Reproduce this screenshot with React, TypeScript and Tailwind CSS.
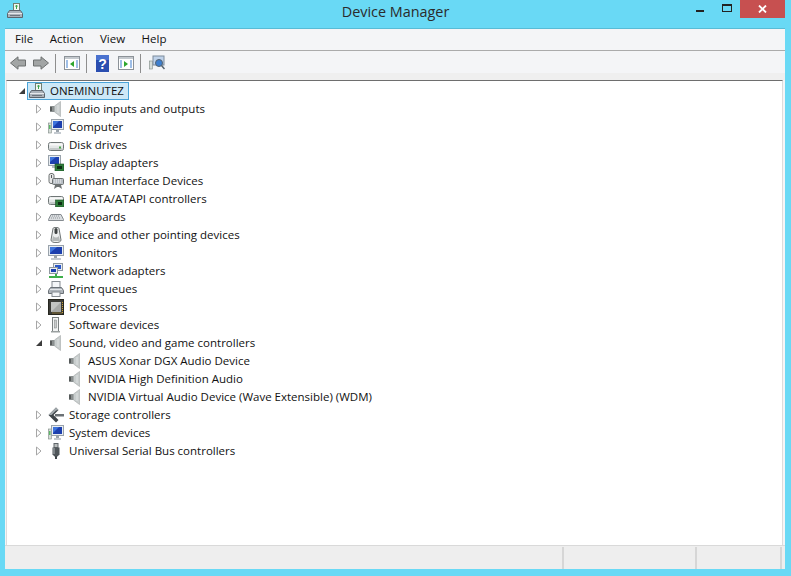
const font = { fontFamily: '"Open Sans", "Noto Sans", sans-serif' };

function Speaker() {
  return (
    <svg width="16" height="16" viewBox="0 0 16 16">
      <rect x="2" y="5" width="5" height="6" fill="#8b9090" />
      <rect x="2" y="6" width="2" height="4" fill="#565a5a" />
      <path d="M6.5 5 L12.5 0.5 V15.5 L6.5 11 Z" fill="#c8cdcd" stroke="#a4aaaa" strokeWidth="0.6" />
      <path d="M10 4 V12" stroke="#dfe3e3" />
    </svg>
  );
}

function Monitor({ tower }: { tower?: boolean }) {
  return (
    <svg width="16" height="16" viewBox="0 0 16 16">
      {tower && <rect x="0.3" y="4" width="3" height="10" fill="#d6dcd8" stroke="#7f8a86" strokeWidth="0.6" />}
      {tower && <rect x="1.2" y="6" width="1.2" height="4" fill="#3fb04a" />}
      <rect x={tower ? 3.5 : 0.5} y="0.5" width={tower ? 12 : 15} height="10" fill="#e8edf2" stroke="#9aa3ab" />
      <rect x={tower ? 5 : 2} y="2" width={tower ? 9 : 12} height="7" fill="#1c3fae" />
      <path d={tower ? 'M5 2h6L5 8z' : 'M2 2h7L2 8z'} fill="#3e74dc" />
      <rect x={tower ? 8 : 6} y="11" width="3" height="2" fill="#9aa3ab" />
      <rect x={tower ? 6 : 3} y="13" width={tower ? 7 : 10} height="2" fill="#c4cad0" />
    </svg>
  );
}

function Disk({ chip }: { chip?: boolean }) {
  return (
    <svg width="16" height="16" viewBox="0 0 16 16">
      <rect x="0.5" y="5.5" width="15" height="8" rx="2" fill="#e4e7e7" stroke="#6f7676" />
      <rect x="1.5" y="6.5" width="13" height="2" fill="#f7f8f8" />
      <rect x="1.5" y="11" width="13" height="2" fill="#c4c9c9" />
      <rect x="11" y="9.5" width="2" height="2" fill="#4aa54a" />
      {chip && <rect x="7.5" y="9" width="8.5" height="7" fill="#2f7d3a" stroke="#1c4f25" strokeWidth="0.6" />}
      {chip && <rect x="10" y="11" width="4" height="3" fill="#0d2e14" />}
    </svg>
  );
}

function Display() {
  return (
    <svg width="16" height="16" viewBox="0 0 16 16">
      <rect x="0.5" y="0.5" width="12" height="10" fill="#e8edf2" stroke="#9aa3ab" />
      <rect x="2" y="2" width="9" height="7" fill="#1c3fae" />
      <path d="M2 2h6L2 7z" fill="#3e74dc" />
      <rect x="4" y="11" width="6" height="2" fill="#b6bcc2" />
      <rect x="7" y="9" width="9" height="7" fill="#2f7d3a" stroke="#1c4f25" strokeWidth="0.6" />
      <rect x="9" y="11" width="5" height="3" fill="#0d2e14" />
    </svg>
  );
}

function Hid() {
  return (
    <svg width="16" height="16" viewBox="0 0 16 16">
      <rect x="1" y="0.5" width="5" height="10" rx="2" fill="#e8e8e8" stroke="#6d7272" />
      <rect x="3" y="2" width="1" height="3" fill="#555a5a" />
      <rect x="4.5" y="5.5" width="11" height="6" rx="1" fill="#b9bfc5" stroke="#6d7272" />
      <path d="M6 7h8M6 9h8" stroke="#f3f4f5" strokeDasharray="1 1" />
      <path d="M6 16l1-4h6l1 4-3-2H9z" fill="#6d7272" />
    </svg>
  );
}

function Keyboard() {
  return (
    <svg width="16" height="16" viewBox="0 0 16 16">
      <path d="M3 5.5h10l2.5 5v1H0.5v-1z" fill="#d9dcdf" stroke="#858b90" />
      <path d="M4 7h8M3 9h10" stroke="#8f959a" strokeDasharray="1 1" />
    </svg>
  );
}

function Mouse() {
  return (
    <svg width="16" height="16" viewBox="0 0 16 16">
      <path d="M5 1.5C5 0 11 0 11 1.5L13 13c0 3.5-10 3.5-10 0z" fill="#eceeee" stroke="#6d7272" />
      <rect x="6.5" y="1" width="3" height="6" rx="1.5" fill="#3f4343" />
      <path d="M5 9c2 2 4 2 6 0l1 5H4z" fill="#b4b8b8" />
    </svg>
  );
}

function Network() {
  return (
    <svg width="16" height="16" viewBox="0 0 16 16">
      <rect x="5.5" y="0.5" width="9" height="7" fill="#e8edf2" stroke="#8f98a0" />
      <rect x="7" y="2" width="6" height="4" fill="#2a57c8" />
      <rect x="1.5" y="4.5" width="8" height="6" fill="#e8edf2" stroke="#8f98a0" />
      <rect x="3" y="6" width="5" height="3" fill="#1c3fae" />
      <rect x="7" y="11" width="2" height="3" fill="#3fb04a" />
      <rect x="1" y="13" width="14" height="2" fill="#3fb04a" />
    </svg>
  );
}

function Printer() {
  return (
    <svg width="16" height="16" viewBox="0 0 16 16">
      <rect x="4" y="0.5" width="8" height="6" fill="#f4f6f8" stroke="#868c92" />
      <path d="M2.5 6.5h11l2 3v3H0.5v-3z" fill="#aeb4ba" stroke="#6b7177" />
      <rect x="2" y="8" width="12" height="1" fill="#e2e5e8" />
      <rect x="4" y="11" width="8" height="4.5" fill="#f4f6f8" stroke="#868c92" />
    </svg>
  );
}

function Chip() {
  return (
    <svg width="16" height="16" viewBox="0 0 16 16">
      <rect x="0.5" y="0.5" width="15" height="15" fill="#3c3c38" stroke="#26261f" />
      <rect x="3" y="3" width="10" height="10" fill="#a6a8a6" />
      <path d="M3 3h10L3 13z" fill="#c2c4c2" />
      <path d="M14.5 3v11h-11" stroke="#c9a033" strokeDasharray="1 1" fill="none" />
    </svg>
  );
}

function Software() {
  return (
    <svg width="16" height="16" viewBox="0 0 16 16">
      <rect x="4.5" y="0.5" width="6" height="14" fill="#f2f3f3" stroke="#7a8080" />
      <rect x="6.5" y="3" width="2" height="8" fill="#c9cccc" stroke="#7a8080" strokeWidth="0.5" />
      <rect x="3" y="14" width="9" height="1.5" fill="#9aa0a0" />
    </svg>
  );
}

function Storage() {
  return (
    <svg width="16" height="16" viewBox="0 0 16 16">
      <path d="M8 0.5 L0.5 8 L8 15.5 L10.5 13 L5.5 8 L10.5 3 Z" fill="#3f4549" />
      <path d="M8 0.5 L0.5 8 L3.5 8 L8 3.5 L10.5 3Z" fill="#a3aaae" />
      <rect x="7" y="7" width="9" height="2.5" fill="#6b7175" />
    </svg>
  );
}

function Usb() {
  return (
    <svg width="16" height="16" viewBox="0 0 16 16">
      <rect x="6" y="0.5" width="4" height="4" fill="#b9bdbd" stroke="#60666a" />
      <path d="M4.5 4.5h7v7l-2 2h-3l-2-2z" fill="#50565a" />
      <rect x="5" y="5" width="2" height="6" fill="#80868a" />
      <rect x="7" y="13" width="2" height="3" fill="#3f4549" />
    </svg>
  );
}

function HostIcon() {
  return (
    <svg width="16" height="16" viewBox="0 0 16 16">
      <rect x="6.5" y="0.5" width="6" height="7" fill="#f2f6f2" stroke="#6f7f73" />
      <path d="M9.5 6V2.5M8.5 3.5l1-1.5 1 1.5" stroke="#3aa34a" fill="none" />
      <path d="M2.5 7.5h11l2 3v4H0.5v-4z" fill="#aab2ba" stroke="#5c646c" />
      <rect x="1" y="10" width="14" height="1" fill="#e6e9ec" />
      <rect x="3" y="12" width="10" height="1" fill="#6e767e" />
    </svg>
  );
}

function Collapsed() {
  return (
    <svg width="8" height="10" viewBox="0 0 8 10">
      <path d="M1.5 1 L6 5 L1.5 9 Z" fill="#fff" stroke="#a6a6a6" />
    </svg>
  );
}

function Expanded() {
  return (
    <svg width="8" height="8" viewBox="0 0 8 8">
      <path d="M7 1 V7 H1 Z" fill="#3c3c3c" />
    </svg>
  );
}

function Row({ label, icon, open }: { label: string; icon: React.ReactNode; open?: boolean }) {
  return (
    <div className="flex h-[18px] items-center">
      <div className="flex w-[41px] shrink-0 justify-end pr-[5px]">{open ? <Expanded /> : <Collapsed />}</div>
      <div className="flex w-[16px] shrink-0 justify-center">{icon}</div>
      <span className="ml-[5px] text-[11.5px] text-[#111]">{label}</span>
    </div>
  );
}

function Child({ label }: { label: string }) {
  return (
    <div className="flex h-[18px] items-center pl-[60px]">
      <Speaker />
      <span className="ml-[5px] text-[11.5px] text-[#111]">{label}</span>
    </div>
  );
}

function ToolSep({ className }: { className: string }) {
  return <div className={`h-[19px] w-[1px] bg-[#8e8e8e] ${className}`} />;
}

function PaneIcon({ right }: { right?: boolean }) {
  return (
    <svg width="16" height="16" viewBox="0 0 16 16">
      <rect x="0.5" y="1.5" width="15" height="13" fill="#fff" stroke="#8c9298" />
      <rect x="1" y="2" width="14" height="2" fill="#c4c9ce" />
      <path d="M2 6h2M2 8h2M2 10h2M2 12h2M12 6h2M12 8h2M12 10h2M12 12h2" stroke="#3f7fd0" />
      <path d={right ? 'M6 6 L10 9 L6 12 Z' : 'M10 6 L6 9 L10 12 Z'} fill="#2da62d" />
    </svg>
  );
}

function Arrow({ right }: { right?: boolean }) {
  return (
    <svg width="16" height="14" viewBox="0 0 16 14" className={right ? 'ml-[7px]' : ''}>
      <path d={right ? 'M0.5 4 H8 V0.8 L15.5 7 L8 13.2 V10 H0.5 Z' : 'M15.5 4 H8 V0.8 L0.5 7 L8 13.2 V10 H15.5 Z'} fill="#a2a5a5" stroke="#6d7070" />
    </svg>
  );
}

export default function App() {
  return (
    <div className="flex h-[576px] w-[791px] flex-col overflow-hidden bg-[#69d9f5]" style={font}>
      {/* title bar */}
      <div className="relative h-[28px] shrink-0">
        <div className="absolute left-[7px] top-[3px]"><HostIcon /></div>
        <div className="pt-[2px] text-center text-[14.4px] leading-[20px] text-[#2b2b2b]">Device Manager</div>
        <div className="absolute left-[696px] top-[10px] h-[2px] w-[8px] bg-[#222]" />
        <div className="absolute left-[722px] top-[4px] h-[8px] w-[10px] border border-t-2 border-[#222]" />
        <div className="absolute right-[6px] top-0 flex h-[18px] w-[45px] items-center justify-center bg-[#c75050]">
          <svg width="9" height="8" viewBox="0 0 9 8"><path d="M1 0.5 L8 7.5 M8 0.5 L1 7.5" stroke="#fff" strokeWidth="1.8" /></svg>
        </div>
      </div>

      <div className="ml-[5px] mr-[6px] flex min-h-0 flex-1 flex-col border-t border-[#58bcd6] bg-[#f4f5f7]">
        {/* menu */}
        <div className="flex h-[22px] shrink-0 items-center gap-[16.5px] border-b border-[#ababab] pb-[2px] pl-[10px] text-[11.5px] text-[#111]">
          <span>File</span>
          <span>Action</span>
          <span>View</span>
          <span>Help</span>
        </div>
        {/* toolbar */}
        <div className="flex h-[22px] shrink-0 items-center pl-[5px] pt-[2px]">
          <Arrow />
          <Arrow right />
          <ToolSep className="ml-[6px]" />
          <div className="ml-[8px]"><PaneIcon /></div>
          <ToolSep className="ml-[6px]" />
          <svg width="13" height="19" viewBox="0 0 13 19" className="ml-[9px]">
            <rect width="13" height="17" y="1" fill="#2a4eb0" />
            <rect width="13" height="5" y="1" fill="#4a72cf" />
            <text x="6.5" y="15" fill="#fff" fontSize="14" fontWeight="700" textAnchor="middle" fontFamily="Liberation Sans">?</text>
          </svg>
          <div className="ml-[9px]"><PaneIcon right /></div>
          <ToolSep className="ml-[6px]" />
          <svg width="16" height="16" viewBox="0 0 16 16" className="ml-[8px]">
            <rect x="0.3" y="6" width="3" height="8" fill="#d6dcd8" stroke="#7f8a86" strokeWidth="0.6" />
            <rect x="4" y="1" width="11" height="9" fill="#bfd2ea" stroke="#7d8c9c" />
            <circle cx="10" cy="8" r="3.5" fill="#3d7fd0" stroke="#55636f" />
            <path d="M12.5 10.5 L15.5 14" stroke="#55636f" strokeWidth="1.5" />
          </svg>
        </div>
        <div className="h-[7px] shrink-0 bg-[#efefef]" />
        {/* tree */}
        <div className="ml-[1px] mr-[2px] min-h-0 flex-1 border-x border-t border-x-[#dcdcdc] border-t-[#6e6e6e] bg-white pt-[1px]">
          <div className="flex h-[18px] items-center">
            <div className="flex w-[20px] justify-end pr-[1px]"><Expanded /></div>
            <div className="flex h-[18px] items-center border border-[#4aa3d8] bg-[#cde8f7] pl-[1px] pr-[4px]">
              <HostIcon />
              <span className="ml-[5px] text-[11.5px] text-[#111]">ONEMINUTEZ</span>
            </div>
          </div>
          <div>
            <Row label="Audio inputs and outputs" icon={<Speaker />} />
            <Row label="Computer" icon={<Monitor tower />} />
            <Row label="Disk drives" icon={<Disk />} />
            <Row label="Display adapters" icon={<Display />} />
            <Row label="Human Interface Devices" icon={<Hid />} />
            <Row label="IDE ATA/ATAPI controllers" icon={<Disk chip />} />
            <Row label="Keyboards" icon={<Keyboard />} />
            <Row label="Mice and other pointing devices" icon={<Mouse />} />
            <Row label="Monitors" icon={<Monitor />} />
            <Row label="Network adapters" icon={<Network />} />
            <Row label="Print queues" icon={<Printer />} />
            <Row label="Processors" icon={<Chip />} />
            <Row label="Software devices" icon={<Software />} />
            <Row label="Sound, video and game controllers" icon={<Speaker />} open />
            <Child label="ASUS Xonar DGX Audio Device" />
            <Child label="NVIDIA High Definition Audio" />
            <Child label="NVIDIA Virtual Audio Device (Wave Extensible) (WDM)" />
            <Row label="Storage controllers" icon={<Storage />} />
            <Row label="System devices" icon={<Monitor tower />} />
            <Row label="Universal Serial Bus controllers" icon={<Usb />} />
          </div>
        </div>
        {/* status bar */}
        <div className="flex h-[24px] shrink-0 border-t border-[#d9d9d9] bg-[#eeeeee] pt-[1px]">
          <div className="w-[559px] border-r-2 border-[#d6d6d6]" />
          <div className="w-[133px] border-r-2 border-[#d6d6d6]" />
          <div className="w-[85px] border-r-2 border-[#d6d6d6]" />
        </div>
      </div>
      <div className="h-[7px] shrink-0" />
    </div>
  );
}
